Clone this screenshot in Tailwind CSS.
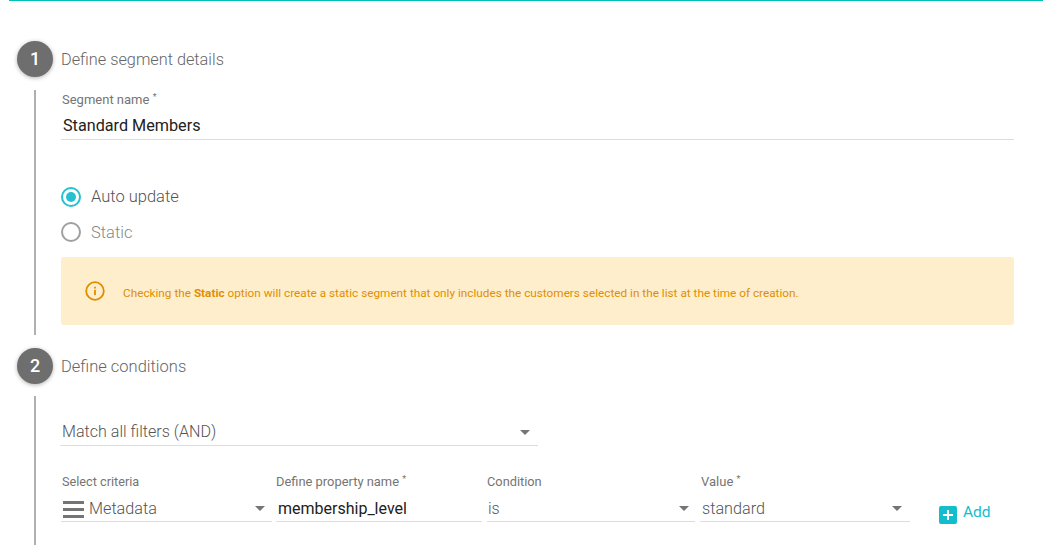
<!DOCTYPE html>
<html lang="en">
<head>
  <meta charset="UTF-8" />
  <title>Define segment</title>
  <script src="https://cdn.jsdelivr.net/npm/@tailwindcss/browser@4"></script>
</head>
<body class="bg-white font-['Roboto',sans-serif] h-[545px] overflow-hidden">

<!-- top rule -->
<div class="ml-[9px] h-px bg-[#00bfb5]"></div>

<div class="pl-[17px] pr-[29px] pt-[40px]">

  <!-- Step 1 -->
  <div class="flex items-center h-9">
    <div class="w-9 h-9 rounded-full bg-[#6e6e6e] text-white text-lg font-medium flex items-center justify-center shadow-[0_1px_4px_rgba(0,0,0,0.3)]">1</div>
    <span class="ml-2 pt-[2px] text-[16.3px] font-light text-[#666666]">Define segment details</span>
  </div>

  <div class="ml-[17px] mt-[13px] h-[245px] border-l-2 border-[#b0b0b0] pl-[25px]">
    <div class="pt-[3px] pl-px text-[13px] leading-[14px] text-[#757575]">Segment name <sup class="text-[9px]">*</sup></div>
    <div class="mt-[2px] h-[31px] border-b border-[#dddddd] pl-[2px] text-[16.2px] leading-[34px] text-[#212121]">Standard Members</div>

    <div class="mt-[47px] flex items-center h-5">
      <span class="w-5 h-5 rounded-full border-2 border-[#26c1d0] flex items-center justify-center">
        <span class="w-[10px] h-[10px] rounded-full bg-[#26c1d0]"></span>
      </span>
      <span class="ml-[10px] text-[16.5px] font-light text-[#555555]">Auto update</span>
    </div>
    <div class="mt-[15px] flex items-center h-5">
      <span class="w-5 h-5 rounded-full border-2 border-[#a0a0a0]"></span>
      <span class="ml-[10px] pt-[2px] text-[16.5px] font-light text-[#888888]">Static</span>
    </div>

    <div class="mt-[15px] h-[68px] rounded-[3px] bg-[#ffeecc] flex items-center pl-[24px]">
      <svg class="w-5 h-5" viewBox="0 0 20 20" fill="none">
        <circle cx="10" cy="10" r="8.8" stroke="#e08e00" stroke-width="1.8"/>
        <rect x="9.1" y="8.8" width="1.8" height="5.4" fill="#e08e00"/>
        <rect x="9.1" y="5.7" width="1.8" height="1.8" fill="#e08e00"/>
      </svg>
      <p class="ml-[18px] mt-[5px] text-[11.78px] text-[#e08e00]">Checking the <b>Static</b> option will create a static segment that only includes the customers selected in the list at the time of creation.</p>
    </div>
  </div>

  <!-- Step 2 -->
  <div class="mt-[13px] flex items-center h-9">
    <div class="w-9 h-9 rounded-full bg-[#6e6e6e] text-white text-lg font-medium flex items-center justify-center shadow-[0_1px_4px_rgba(0,0,0,0.3)]">2</div>
    <span class="ml-2 pt-[2px] text-[16.5px] font-light text-[#666666]">Define conditions</span>
  </div>

  <div class="ml-[17px] mt-[12px] h-[150px] border-l-2 border-[#b0b0b0] pl-[24px]">
    <div class="pt-[21px] w-[478px]">
      <div class="h-[29px] border-b border-[#dddddd] flex items-center justify-between pl-[2px] pr-[8px] pt-[3px] text-[16.1px] font-light text-[#555555]">
        <span>Match all filters (AND)</span>
        <span class="w-0 h-0 border-x-[5px] border-x-transparent border-t-[5px] border-t-[#757575]"></span>
      </div>
    </div>

    <div class="mt-[29px] ml-px flex items-start">
      <div class="w-[211px]">
        <div class="pl-[1px] text-[12.7px] leading-[14px] text-[#757575]">Select criteria</div>
        <div class="mt-[3px] h-[30px] pt-[6px] border-b border-[#dddddd] flex items-center pl-[2px] pr-[7px] text-[16.2px] font-light text-[#555555]">
          <svg class="w-[21px] h-[17px]" viewBox="0 0 21 17" fill="#757575"><rect y="0" width="21" height="3"/><rect y="7" width="21" height="3"/><rect y="14" width="21" height="3"/></svg>
          <span class="ml-[5px]">Metadata</span>
          <span class="ml-auto -mt-[2px] w-0 h-0 border-x-[5px] border-x-transparent border-t-[5px] border-t-[#757575]"></span>
        </div>
      </div>
      <div class="ml-[4px] w-[206px]">
        <div class="text-[12.9px] leading-[14px] text-[#757575]">Define property name <sup class="text-[9px]">*</sup></div>
        <div class="mt-[3px] h-[30px] pt-1 border-b border-[#dddddd] flex items-center pl-[2px] text-base text-[#212121]">membership_level</div>
      </div>
      <div class="ml-[5px] w-[208px]">
        <div class="text-[12.8px] leading-[14px] text-[#757575]">Condition</div>
        <div class="mt-[3px] h-[30px] pt-1 border-b border-[#dddddd] flex items-center justify-between pl-[1px] pr-[6px] text-base font-light text-[#555555]">
          <span>is</span>
          <span class="w-0 h-0 border-x-[5px] border-x-transparent border-t-[5px] border-t-[#757575]"></span>
        </div>
      </div>
      <div class="ml-[5px] w-[210px]">
        <div class="pl-px text-[13px] leading-[14px] text-[#757575]">Value <sup class="text-[9px]">*</sup></div>
        <div class="mt-[3px] h-[30px] pt-[6px] border-b border-[#dddddd] flex items-center justify-between pl-[2px] pr-[8px] text-[16.2px] font-light text-[#555555]">
          <span>standard</span>
          <span class="-mt-[2px] w-0 h-0 border-x-[5px] border-x-transparent border-t-[5px] border-t-[#757575]"></span>
        </div>
      </div>
      <div class="ml-[29px] mt-[28px] flex items-center text-[#14bdcc] text-[15.5px]">
        <span class="w-[18px] h-[18px] mt-[2px] rounded-[2px] bg-[#14bdcc] flex items-center justify-center">
          <svg class="w-3 h-3" viewBox="0 0 12 12" fill="#fff"><rect x="5" y="1" width="2" height="10"/><rect x="1" y="5" width="10" height="2"/></svg>
        </span>
        <span class="ml-[6px] -mt-[2px]">Add</span>
      </div>
    </div>
  </div>
</div>
</body>
</html>
